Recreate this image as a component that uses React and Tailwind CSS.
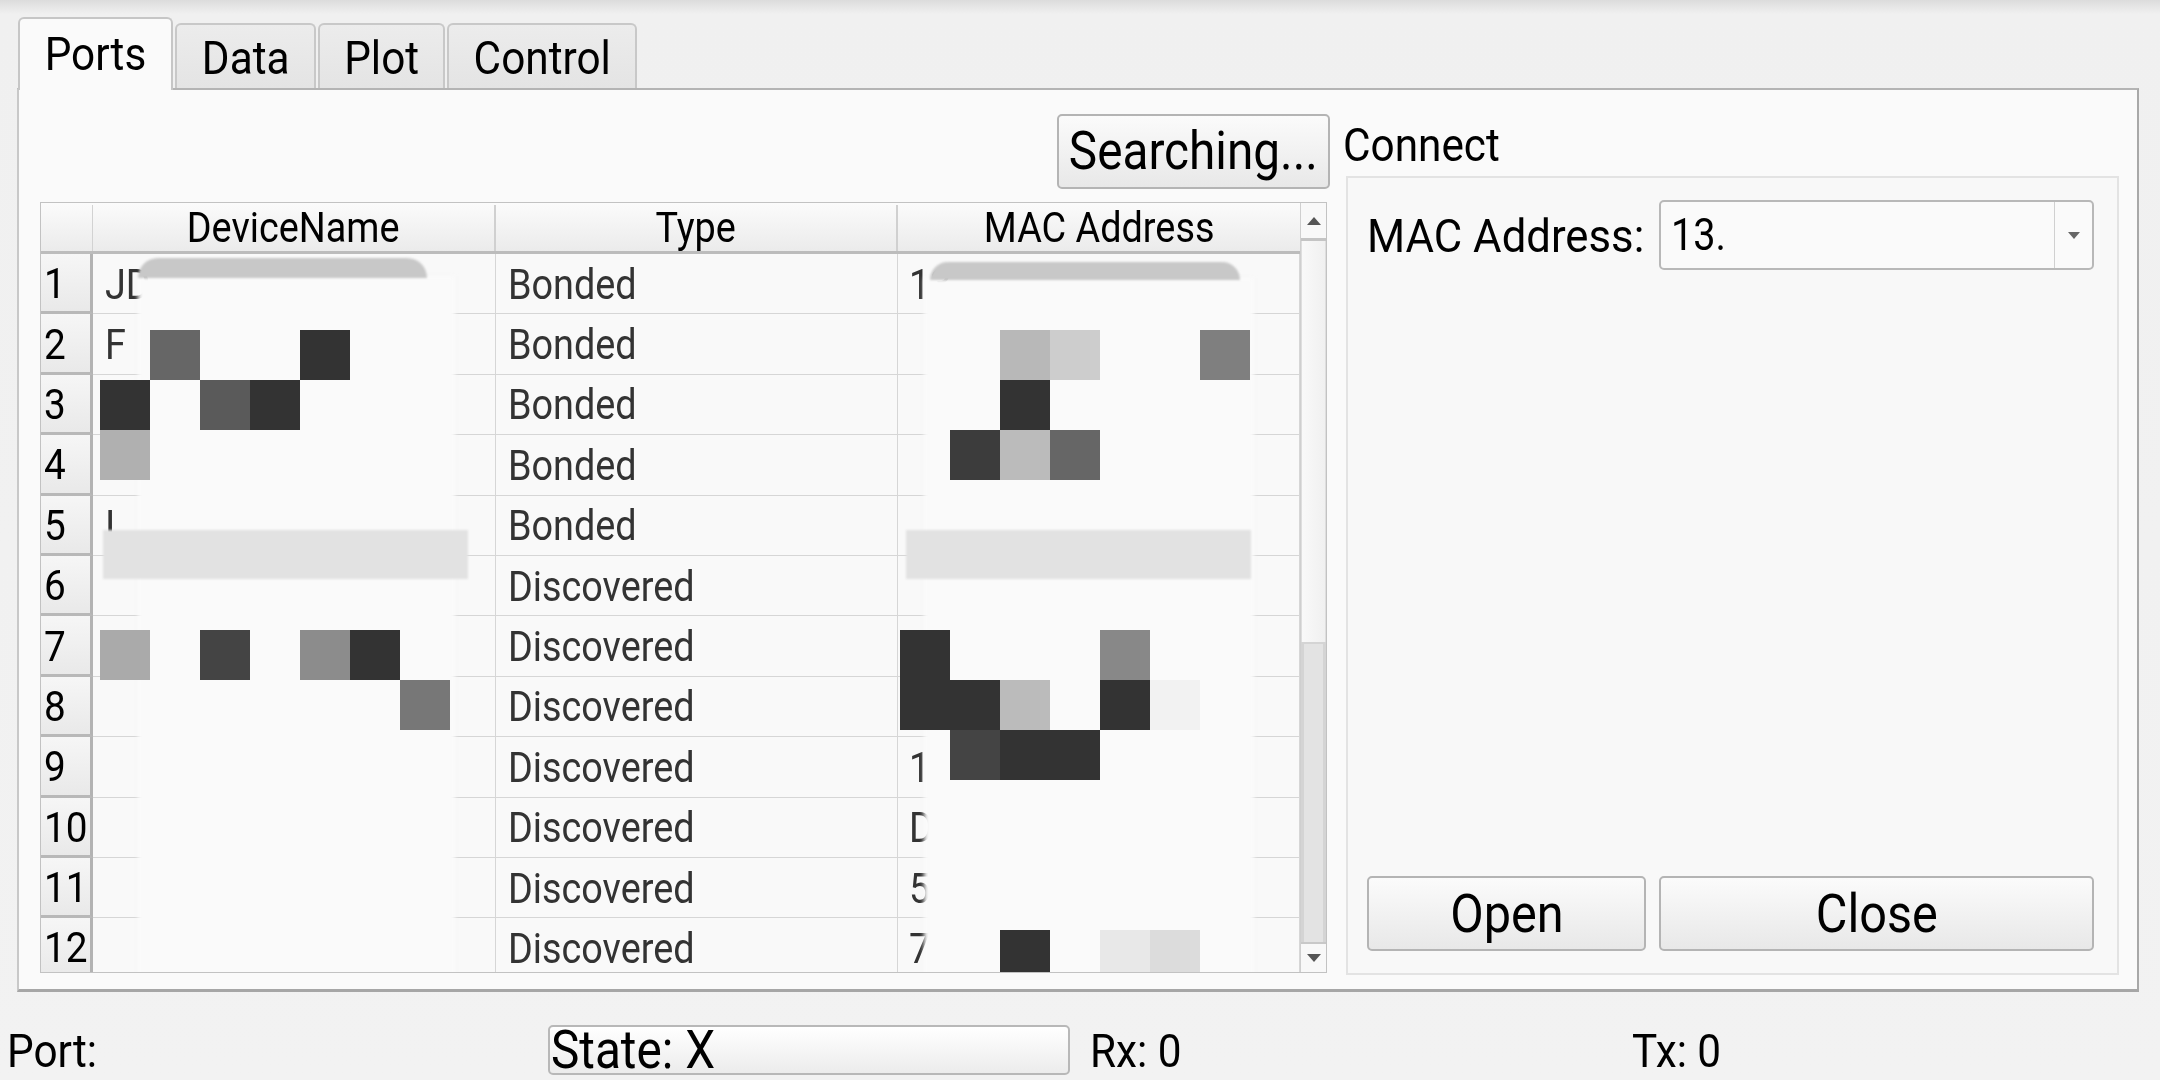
import React from "react";

const rows = [
  { n: 1, name: "JD", type: "Bonded", mac: "13" },
  { n: 2, name: "F", type: "Bonded", mac: "" },
  { n: 3, name: "H", type: "Bonded", mac: "" },
  { n: 4, name: "", type: "Bonded", mac: "" },
  { n: 5, name: "I", type: "Bonded", mac: "" },
  { n: 6, name: "", type: "Discovered", mac: "" },
  { n: 7, name: "I", type: "Discovered", mac: "" },
  { n: 8, name: "", type: "Discovered", mac: "" },
  { n: 9, name: "", type: "Discovered", mac: "1" },
  { n: 10, name: "", type: "Discovered", mac: "D" },
  { n: 11, name: "", type: "Discovered", mac: "5" },
  { n: 12, name: "", type: "Discovered", mac: "7C" },
];

// pixelation blocks of the redaction (column k, row j, colour)
const blocks = [
  [1, 0, "#666666"], [4, 0, "#333333"],
  [0, 1, "#333333"], [2, 1, "#5a5a5a"], [3, 1, "#333333"],
  [0, 2, "#b0b0b0"],
  [0, 6, "#aaaaaa"], [2, 6, "#444444"], [4, 6, "#8c8c8c"], [5, 6, "#333333"],
  [6, 7, "#777777"],
  [18, 0, "#b8b8b8"], [19, 0, "#cdcdcd"], [22, 0, "#7f7f7f"],
  [18, 1, "#333333"],
  [17, 2, "#3c3c3c"], [18, 2, "#bbbbbb"], [19, 2, "#666666"],
  [16, 6, "#333333"], [20, 6, "#888888"],
  [16, 7, "#333333"], [17, 7, "#333333"], [18, 7, "#bbbbbb"], [20, 7, "#333333"], [21, 7, "#f2f2f2"],
  [17, 8, "#444444"], [18, 8, "#333333"], [19, 8, "#333333"],
  [18, 12, "#333333"], [20, 12, "#e8e8e8"], [21, 12, "#dcdcdc"],
];

// slightly condensed text, as in the reference
function C({ children }) {
  return <span className="inline-block origin-center scale-x-[0.9] whitespace-pre">{children}</span>;
}
function L({ children }) {
  return <span className="inline-block origin-left scale-x-[0.9] whitespace-pre">{children}</span>;
}

function Btn({ className, children }) {
  return (
    <div
      className={
        "flex shrink-0 items-center justify-center rounded-[5px] border-2 border-[#b4b4b4] bg-gradient-to-b from-[#fbfbfb] to-[#e8e8e8] text-black leading-none " +
        className
      }
    >
      <C>{children}</C>
    </div>
  );
}

function Tab({ label, active, w }) {
  if (active) {
    return (
      <div
        className={`relative z-10 -mb-[2px] flex h-[73px] items-center justify-center rounded-t-[6px] border-2 border-b-0 border-[#c6c6c6] bg-[#fafafa] ${w} text-[47px] leading-none text-black`}
      >
        <span className="-mt-[2px]">
          <C>{label}</C>
        </span>
      </div>
    );
  }
  return (
    <div
      className={`flex h-[65px] items-center justify-center rounded-t-[6px] border-2 border-b-0 border-[#c8c8c8] bg-gradient-to-b from-[#ececec] to-[#e4e4e4] ${w} text-[47px] leading-none text-black`}
    >
      <span className="mt-[2px]">
        <C>{label}</C>
      </span>
    </div>
  );
}

function Table() {
  return (
    <div className="relative flex h-[771px] w-[1287px] overflow-hidden border border-[#c2c2c2] bg-[#f9f9f9]">
      <div className="flex w-[1259px] flex-col">
        {/* header */}
        <div className="flex h-[51px] shrink-0 border-b-[3px] border-[#bcbcbc] bg-gradient-to-b from-[#fbfbfb] to-[#ebebeb] pt-[2px] text-[42px] leading-none text-black">
          <div className="w-[52px] border-r border-[#d2d2d2]" />
          <div className="flex w-[403px] items-center justify-center border-r-2 border-[#d0d0d0]">
            <C>DeviceName</C>
          </div>
          <div className="flex w-[402px] items-center justify-center border-r-2 border-[#d0d0d0]">
            <C>Type</C>
          </div>
          <div className="flex w-[402px] items-center justify-center">
            <C>MAC Address</C>
          </div>
        </div>
        {rows.map((r) => (
          <div key={r.n} className="flex h-[60.4px] shrink-0">
            <div className="flex w-[52px] items-center border-r-[3px] border-b-[3px] border-r-[#b3b3b3] border-b-[#b8b8b8] bg-gradient-to-b from-[#f6f6f6] to-[#e9e9e9] pl-[3px] pt-[2px] text-[43px] leading-none text-black">
              <L>{String(r.n)}</L>
            </div>
            <div className="flex w-[403px] items-center border-r border-b border-[#d6d6d6] pl-[12px] pt-[2px] text-[42px] leading-none text-[#333]">
              <L>{r.name}</L>
            </div>
            <div className="flex w-[402px] items-center border-r border-b border-[#d6d6d6] pl-[12px] pt-[2px] text-[42px] leading-none text-[#333]">
              <L>{r.type}</L>
            </div>
            <div className="flex w-[402px] items-center border-r border-b border-[#d6d6d6] pl-[11px] pt-[2px] text-[42px] leading-none text-[#333]">
              <L>{r.mac}</L>
            </div>
          </div>
        ))}
      </div>
      {/* scrollbar */}
      <div className="flex w-[26px] flex-col border-l border-[#cfcfcf] bg-[#f7f7f7]">
        <div className="flex h-[38px] shrink-0 items-center justify-center border-b-[3px] border-[#c4c4c4] bg-[#f8f8f8]">
          <div className="h-0 w-0 border-x-[7px] border-b-[8px] border-x-transparent border-b-[#555]" />
        </div>
        <div className="h-[401px] shrink-0 border-x border-[#dedede] bg-gradient-to-r from-[#f9f9f9] to-[#f0f0f0]" />
        <div className="flex-1 border-t-2 border-x-[3px] border-[#d4d4d4] bg-[#e3e3e3]" />
        <div className="flex h-[30px] shrink-0 items-center justify-center border-t-2 border-[#c8c8c8] bg-[#f8f8f8]">
          <div className="h-0 w-0 border-x-[7px] border-t-[8px] border-x-transparent border-t-[#555]" />
        </div>
      </div>

      {/* redaction overlays */}
      <div className="absolute left-[97px] top-[73px] h-[700px] w-[317px] bg-[#fafafa] blur-[2px]" />
      <div className="absolute left-[883px] top-[75px] h-[700px] w-[330px] bg-[#fafafa] blur-[2px]" />
      <div className="absolute left-[97px] top-[55px] h-[20px] w-[289px] rounded-t-full bg-[#c8c8c8] blur-[1px]" />
      <div className="absolute left-[889px] top-[59px] h-[18px] w-[310px] rounded-t-full bg-[#c8c8c8] blur-[1px]" />
      <div className="absolute left-[62px] top-[327px] h-[49px] w-[365px] bg-[#e2e2e2] blur-[1px]" />
      <div className="absolute left-[865px] top-[327px] h-[49px] w-[345px] bg-[#e2e2e2] blur-[1px]" />
      {blocks.map(([k, j, c], i) => (
        <div
          key={i}
          className="absolute h-[50px] w-[50px]"
          style={{ left: 59 + 50 * k, top: 127 + 50 * j, backgroundColor: c }}
        />
      ))}
    </div>
  );
}

export default function App() {
  return (
    <div className="flex h-[1080px] w-[2160px] flex-col overflow-hidden bg-[linear-gradient(to_bottom,#dcdcdc_0px,#f0f0f0_14px,#f2f2f2_100%)] font-['Roboto'] text-black">
      {/* tab bar */}
      <div className="mt-[17px] flex h-[71px] items-end gap-[2px] pl-[18px]">
        <Tab label="Ports" active w="w-[155px]" />
        <Tab label="Data" w="w-[141px]" />
        <Tab label="Plot" w="w-[127px]" />
        <Tab label="Control" w="w-[190px]" />
      </div>

      {/* pane */}
      <div className="ml-[17px] flex h-[904px] w-[2122px] gap-[13px] border-x-2 border-t-2 border-b-[3px] border-l-[#c8c8c8] border-r-[#a8a8a8] border-t-[#b4b4b4] border-b-[#a6a6a6] bg-[#fafafa] pl-[21px] pt-[24px]">
        {/* left column */}
        <div className="flex w-[1290px] flex-col gap-[13px]">
          <div className="flex justify-end">
            <Btn className="h-[75px] w-[273px] text-[53px]">Searching...</Btn>
          </div>
          <Table />
        </div>
        {/* right column */}
        <div className="flex w-[776px] flex-col">
          <div className="flex h-[60px] items-center text-[47px] leading-none">
            <L>Connect</L>
          </div>
          <div className="ml-[3px] mt-[2px] flex h-[799px] w-[773px] flex-col justify-between border-2 border-[#e3e3e3] bg-[#f8f8f8] pb-[22px] pl-[19px] pr-[23px] pt-[22px]">
            <div className="flex h-[70px] items-center">
              <span className="min-w-0 flex-1 text-[47px] leading-none">
                <span className="inline-block origin-left scale-x-[0.93] whitespace-pre">MAC Address:</span>
              </span>
              <div className="flex h-[70px] w-[435px] shrink-0 items-center rounded-[5px] border-2 border-[#b8b8b8] bg-[#fafafa]">
                <span className="flex-1 pl-[10px] text-[44px] leading-none">
                  <L>13.</L>
                </span>
                <div className="flex h-full w-[38px] items-center justify-center border-l border-[#d0d0d0]">
                  <div className="h-0 w-0 border-x-[6px] border-t-[7px] border-x-transparent border-t-[#666]" />
                </div>
              </div>
            </div>
            <div className="flex gap-[13px]">
              <Btn className="h-[75px] w-[279px] text-[54px]">Open</Btn>
              <Btn className="h-[75px] w-[435px] text-[54px]">Close</Btn>
            </div>
          </div>
        </div>
      </div>

      {/* status bar */}
      <div className="flex h-[88px] items-center pt-[28px] text-[47px] leading-none">
        <div className="w-[548px] pl-[7px]">
          <L>Port:</L>
        </div>
        <div className="flex h-[50px] w-[522px] items-center rounded-[5px] border-2 border-[#b8b8b8] bg-gradient-to-b from-[#ffffff] to-[#ececec] pl-[1px] text-[53px]">
          <L>State: X</L>
        </div>
        <div className="w-[562px] pl-[20px]">
          <L>Rx: 0</L>
        </div>
        <div>
          <L>Tx: 0</L>
        </div>
      </div>
    </div>
  );
}
